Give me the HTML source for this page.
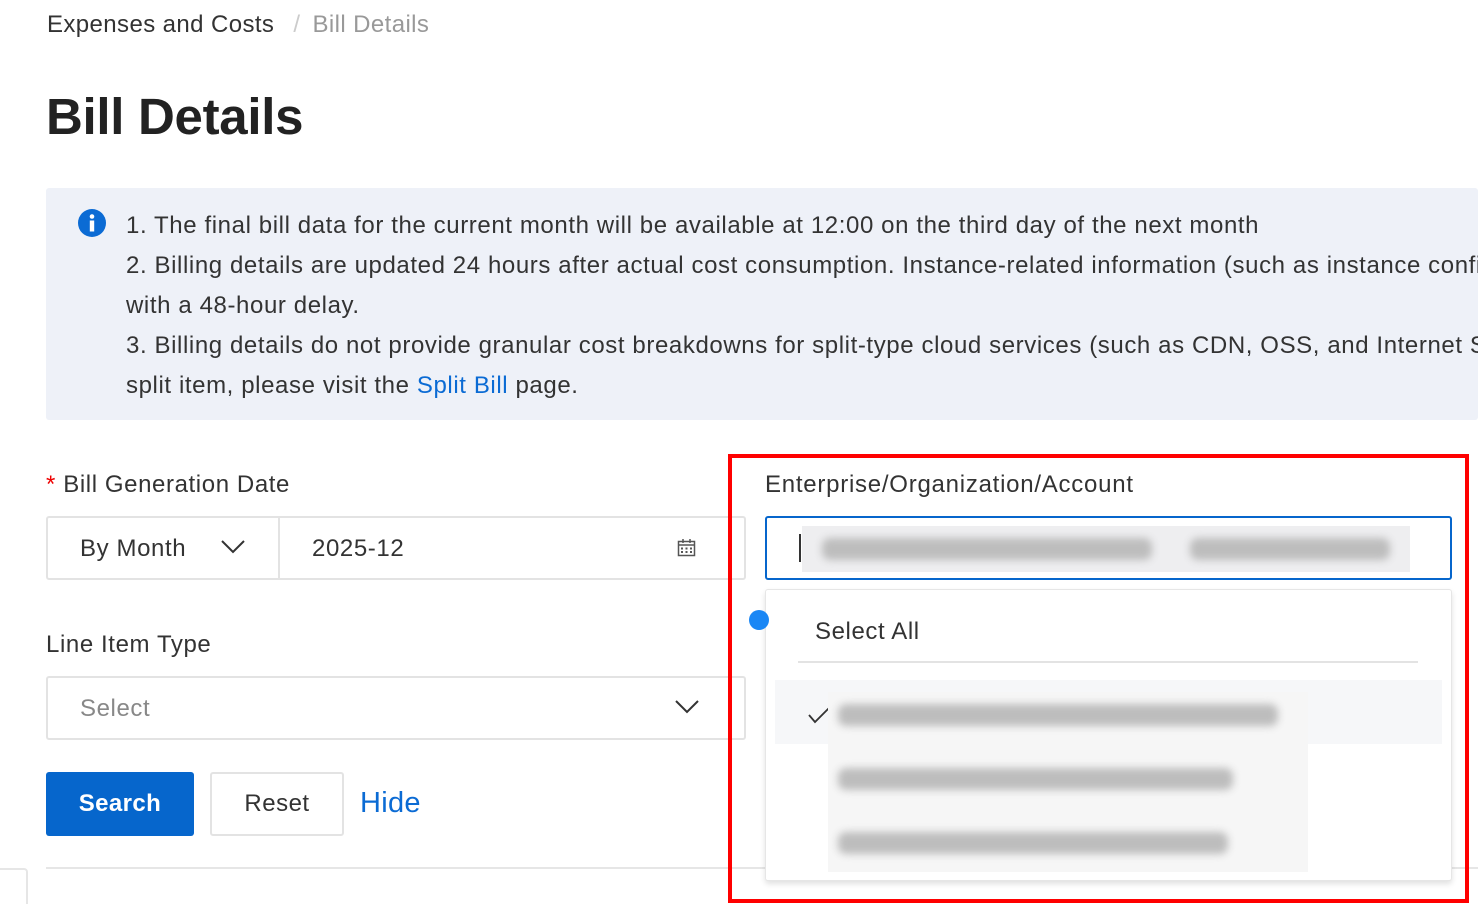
<!DOCTYPE html>
<html><head><meta charset="utf-8"><style>
*{margin:0;padding:0;box-sizing:border-box}
html,body{width:1478px;height:904px;overflow:hidden}
body{background:#fff;font-family:"Liberation Sans",Arial,sans-serif;color:#333;position:relative}
.a{position:absolute;white-space:nowrap}
.blur{position:absolute;background:#bdbdbd;filter:blur(4px);border-radius:8px}
.t{font-size:24px;letter-spacing:0.6px}
</style></head><body>
<div class="a" style="left:47px;top:11px;font-size:24px;letter-spacing:0.4px;color:#333">Expenses and Costs <span style="color:#ccc;margin:0 12px">/</span><span style="color:#999">Bill Details</span></div>
<div class="a" style="left:46px;top:87px;font-size:51px;font-weight:bold;color:#222;letter-spacing:-0.3px">Bill Details</div>

<div class="a" style="left:46px;top:188px;width:1432px;height:232px;background:#eef1f8;border-radius:3px;overflow:hidden">
<div class="a t" style="left:80px;top:18px;line-height:40px;color:#333">1. The final bill data for the current month will be available at 12:00 on the third day of the next month<br>2. Billing details are updated 24 hours after actual cost consumption. Instance-related information (such as instance configuration) is updated<br>with a 48-hour delay.<br>3. Billing details do not provide granular cost breakdowns for split-type cloud services (such as CDN, OSS, and Internet Shared Bandwidth). For each<br>split item, please visit the <span style="color:#0b6bd4">Split Bill</span> page.</div>
</div>
<svg class="a" style="left:78px;top:209px" width="28" height="28" viewBox="0 0 28 28"><circle cx="14" cy="14" r="14" fill="#0b6bd4"/><circle cx="14" cy="7.5" r="2.3" fill="#fff"/><rect x="11.8" y="11.5" width="4.4" height="11" fill="#fff"/></svg>

<div class="a t" style="left:46px;top:471px;color:#333"><span style="color:#e00">*</span> Bill Generation Date</div>
<div class="a" style="left:46px;top:516px;width:700px;height:64px;border:2px solid #e3e3e3;border-radius:3px"></div>
<div class="a" style="left:278px;top:518px;width:2px;height:60px;background:#e3e3e3"></div>
<div class="a t" style="left:80px;top:535px;color:#333">By Month</div>
<svg class="a" style="left:221px;top:540px" width="24" height="14"><path d="M1 1 L12 12 L23 1" fill="none" stroke="#333" stroke-width="2"/></svg>
<div class="a t" style="left:312px;top:535px;color:#333">2025-12</div>
<svg class="a" style="left:677px;top:538px" width="20" height="20" viewBox="0 0 20 20"><rect x="1.5" y="3.5" width="16" height="14" fill="none" stroke="#555" stroke-width="1.5"/><line x1="1.5" y1="7" x2="17.5" y2="7" stroke="#555" stroke-width="1.5"/><line x1="6" y1="1" x2="6" y2="5" stroke="#555" stroke-width="1.5"/><line x1="13" y1="1" x2="13" y2="5" stroke="#555" stroke-width="1.5"/><g fill="#555"><rect x="4" y="9.5" width="2" height="2"/><rect x="8.5" y="9.5" width="2" height="2"/><rect x="13" y="9.5" width="2" height="2"/><rect x="4" y="13" width="2" height="2"/><rect x="8.5" y="13" width="2" height="2"/><rect x="13" y="13" width="2" height="2"/></g></svg>

<div class="a t" style="left:46px;top:631px;color:#333">Line Item Type</div>
<div class="a" style="left:46px;top:676px;width:700px;height:64px;border:2px solid #e3e3e3;border-radius:3px"></div>
<div class="a t" style="left:80px;top:695px;color:#888">Select</div>
<svg class="a" style="left:675px;top:700px" width="24" height="14"><path d="M1 1 L12 12 L23 1" fill="none" stroke="#333" stroke-width="2"/></svg>

<div class="a" style="left:46px;top:772px;width:148px;height:64px;background:#0666cc;border-radius:3px;color:#fff;font-size:24px;letter-spacing:0.4px;font-weight:bold;text-align:center;line-height:64px">Search</div>
<div class="a" style="left:210px;top:772px;width:134px;height:64px;border:2px solid #e3e3e3;border-radius:3px;font-size:24px;letter-spacing:0.5px;text-align:center;line-height:60px;color:#333">Reset</div>
<div class="a" style="left:360px;top:787px;font-size:29px;letter-spacing:0.3px;color:#0b6bd4">Hide</div>
<div class="a" style="left:46px;top:867px;width:1432px;height:2px;background:#e6e6e6"></div>
<div class="a" style="left:-10px;top:868px;width:38px;height:40px;border:2px solid #e6e6e6;border-radius:4px"></div>

<div class="a" style="left:728px;top:454px;width:741px;height:449px;border:4px solid #f00"></div>
<div class="a" style="left:765px;top:471px;font-size:24px;letter-spacing:0.75px;color:#333">Enterprise/Organization/Account</div>
<div class="a" style="left:765px;top:516px;width:687px;height:64px;border:2px solid #0666cc;border-radius:3px"></div>
<div class="a" style="left:799px;top:534px;width:2px;height:28px;background:#333"></div>
<div class="a" style="left:802px;top:526px;width:608px;height:46px;background:#eeeef0"></div>
<div class="blur" style="left:822px;top:538px;width:330px;height:22px"></div>
<div class="blur" style="left:1190px;top:538px;width:200px;height:22px"></div>
<div class="a" style="left:765px;top:589px;width:687px;height:292px;background:#fff;border:1px solid #e6e6e6;border-radius:3px;box-shadow:0 3px 6px rgba(0,0,0,.12)"></div>
<div class="a" style="left:749px;top:610px;width:20px;height:20px;border-radius:50%;background:#1a87f5"></div>
<div class="a t" style="left:815px;top:618px;color:#333">Select All</div>
<div class="a" style="left:798px;top:661px;width:620px;height:2px;background:#e3e3e3"></div>
<div class="a" style="left:775px;top:680px;width:667px;height:64px;background:#f6f7f9"></div>
<svg class="a" style="left:808px;top:706px" width="22" height="18"><path d="M1 9 L7 16 L21 2" fill="none" stroke="#333" stroke-width="1.8"/></svg>
<div class="a" style="left:828px;top:692px;width:480px;height:180px;background:#f6f6f6"></div>
<div class="blur" style="left:838px;top:704px;width:440px;height:22px"></div>
<div class="blur" style="left:838px;top:768px;width:395px;height:22px"></div>
<div class="blur" style="left:838px;top:832px;width:390px;height:22px"></div>
</body></html>
